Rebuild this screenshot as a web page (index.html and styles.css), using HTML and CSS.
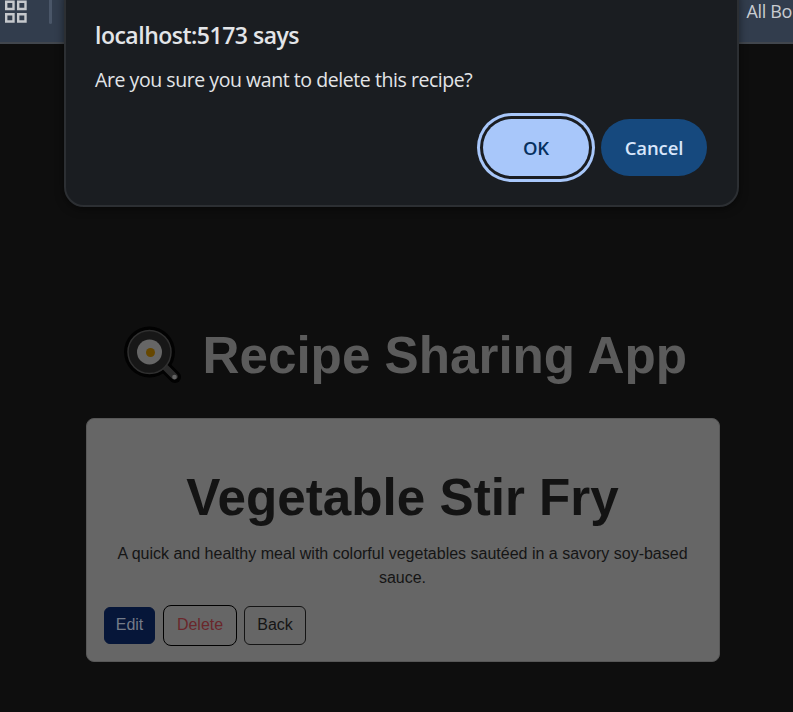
FILE: index.html
```html
<!DOCTYPE html>
<html lang="en">
<head>
<meta charset="utf-8">
<title>Recipe Sharing App</title>
<link rel="stylesheet" href="styles.css">
</head>
<body>
<header class="bookmarks">
  <svg class="grid-icon" width="22" height="23" viewBox="0 0 22 23" fill="none" stroke="#c5c8cc" stroke-width="2.4"><path d="M1.2 1.7h7.3v7.3h-7.3zM13.2 1.7h7.3v7.3h-7.3zM1.2 14.2h7.3v7.3h-7.3zM13.2 14.2h7.3v7.3h-7.3z"/></svg>
  <span class="divider"></span>
  <span class="all-bookmarks">All Bo</span>
</header>
<main class="app">
  <h1 class="app-title">
    <svg class="pan" width="58" height="58" viewBox="0 0 58 58">
      <path d="M38 38L51 51" stroke="#020202" stroke-width="12" stroke-linecap="round"/>
      <circle cx="25.5" cy="26" r="25.5" fill="#020202"/>
      <path d="M38 38L50.5 50.5" stroke="#2a2a2a" stroke-width="6.5" stroke-linecap="round"/>
      <circle cx="25.5" cy="26" r="21.5" fill="#171717" stroke="#303030" stroke-width="1.5"/>
      <circle cx="25.5" cy="26" r="12.5" fill="#666"/>
      <circle cx="26.5" cy="26.5" r="4.5" fill="#664700"/>
      <circle cx="50.5" cy="51" r="2.3" fill="#646464"/>
    </svg>
    <span class="app-name">Recipe Sharing App</span>
  </h1>
  <section class="card">
    <h2 class="recipe-title">Vegetable Stir Fry</h2>
    <p class="description">A quick and healthy meal with colorful vegetables sautéed in a savory soy-based sauce.</p>
    <div class="actions">
      <button class="btn edit">Edit</button>
      <button class="btn delete">Delete</button>
      <button class="btn back">Back</button>
    </div>
  </section>
</main>
<div class="dialog" role="alertdialog">
  <div class="dialog-title"><span>localhost:5173 says</span></div>
  <div class="dialog-message"><span>Are you sure you want to delete this recipe?</span></div>
  <div class="dialog-actions">
    <button class="pill ok">OK</button>
    <button class="pill cancel">Cancel</button>
  </div>
</div>
</body>
</html>
```
FILE: styles.css
```css
* { box-sizing: border-box; }
body {
  margin: 0;
  height: 712px;
  overflow: hidden;
  background: #0e0e0e;
  font-family: "Liberation Sans", Arial, sans-serif;
}
.bookmarks {
  height: 44px;
  background: #323d4d;
  border-bottom: 2px solid #41464d;
  display: flex;
  align-items: flex-start;
  justify-content: flex-start;
}
.grid-icon { margin-left: 5px; flex: none; }
.divider {
  width: 3px;
  height: 24px;
  margin-left: 22px;
  border-radius: 0 0 2px 2px;
  background: #4a5668;
  flex: none;
}
.all-bookmarks {
  margin: -1px 0 0 auto;
  padding-right: 1px;
  color: #c9ccd1;
  font: 18px/24px "Open Sans", sans-serif;
  letter-spacing: -0.35px;
  white-space: nowrap;
}
.app { width: 634px; margin: 281px 0 0 86px; }
.app-title {
  display: flex;
  margin: 0;
  padding-left: 38px;
  height: 93px;
  font-size: 51.2px;
  line-height: 61px;
  color: #5b5b5b;
}
.pan { flex: none; margin-top: 1px; }
.app-name { margin-left: 20.5px; white-space: nowrap; }
.card {
  height: 244px;
  padding: 48px 18px 0 17px;
  background: #666;
  border: 1px solid #575757;
  border-radius: 8px;
}
.recipe-title {
  margin: 0;
  font-size: 51.2px;
  line-height: 62px;
  text-align: center;
  color: #131313;
}
.description {
  margin: 13px 0 15px;
  font-size: 16px;
  line-height: 24px;
  text-align: center;
  color: #151515;
}
.actions { display: flex; align-items: center; }
.btn {
  padding: 0 0 2px;
  font: 16px/24px "Liberation Sans", Arial, sans-serif;
  background: none;
  border: 1px solid #141414;
  border-radius: 6px;
}
.edit { width: 51px; height: 37px; color: #747b88; background: #061639; border-color: #061639; }
.delete { width: 74px; height: 41px; margin-left: 8px; color: #6a272b; border: 1px solid #000; border-radius: 8px; }
.back { width: 62px; height: 39px; margin-left: 7px; color: #151515; }
.dialog {
  position: absolute;
  left: 64px;
  top: -20px;
  width: 675px;
  height: 227px;
  padding: 38px 31px 0 30px;
  background: #1a1d21;
  border: 2px solid #2c2f33;
  border-radius: 20px;
  box-shadow: 0 2px 8px rgba(0, 0, 0, .5);
  font-family: "Open Sans", sans-serif;
  color: #e3e5e8;
}
.dialog-title { margin-left: -1px; font-size: 23px; line-height: 30px; font-weight: 650; letter-spacing: -.5px; white-space: nowrap; }
.dialog-message { margin: 16px 0 0 -1px; font-size: 19.5px; line-height: 28px; letter-spacing: -.44px; white-space: nowrap; }
.dialog-actions { display: flex; justify-content: flex-end; gap: 12px; margin-top: 25px; margin-right: -1px; }
.pill {
  width: 106px;
  height: 57px;
  padding: 0;
  border: 0;
  border-radius: 29px;
  font: 600 18.5px/57px "Open Sans", sans-serif;
  letter-spacing: -.1px;
}
.ok { background: #a8c7fa; color: #06305f; box-shadow: 0 0 0 3px #1a1d21, 0 0 0 6px #a8c7fa; }
.cancel { background: #16497e; color: #d8e6fb; }
```
